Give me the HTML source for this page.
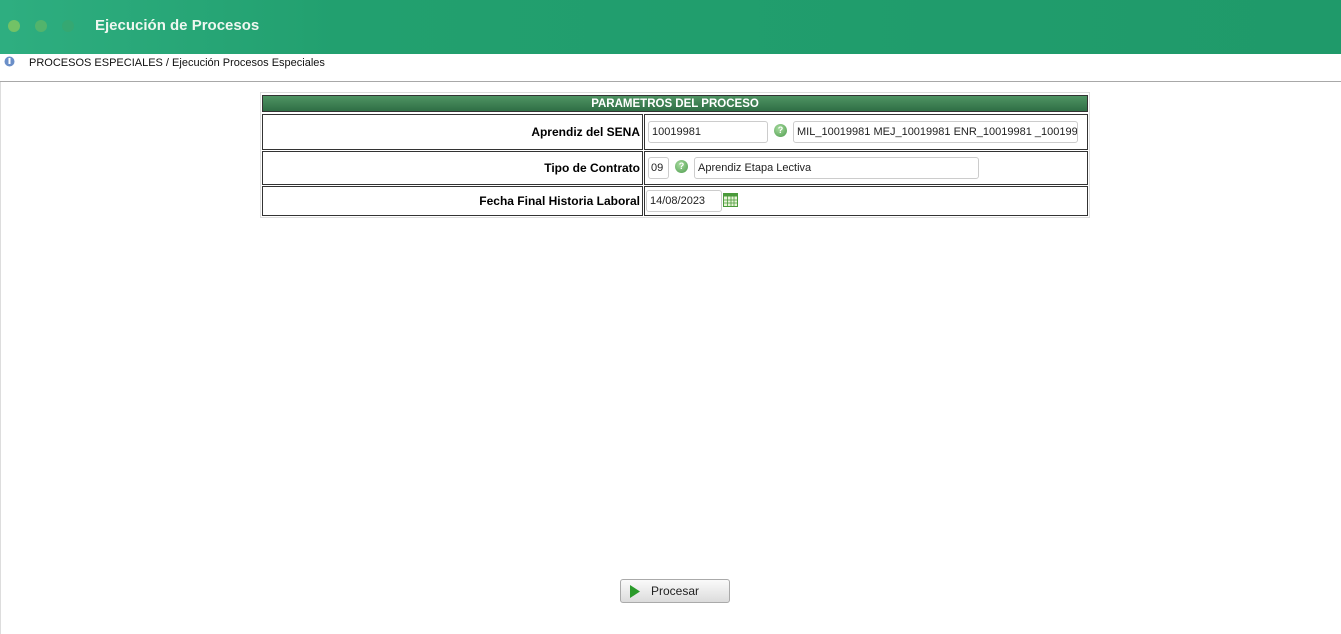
<!DOCTYPE html>
<html><head><meta charset="utf-8"><style>
*{margin:0;padding:0;box-sizing:border-box}
body{width:1341px;height:634px;background:#fff;font-family:"Liberation Sans",sans-serif;font-size:12px;color:#000;position:relative;overflow:hidden}
.hdr{position:absolute;left:0;top:0;width:1341px;height:54px;background:linear-gradient(90deg,#2eae80 0%,#22a06f 25%,#1f9a6a 100%)}
.hdr .t{position:absolute;left:95px;top:17px;color:#eef7f0;font-weight:bold;font-size:15px}
.dot{position:absolute;top:20px;width:12px;height:12px;border-radius:50%}
.bc{position:absolute;left:29px;top:57px;font-size:11px;color:#111}
.line{position:absolute;left:0;top:81px;width:1341px;height:1px;background:#a8a8a8}
.lb{position:absolute;left:0;top:82px;width:1px;height:552px;background:#ddd}
.outer{position:absolute;left:260px;top:92px;width:830px;height:126px;border:1px solid #ddd}
.gh{position:absolute;left:262px;top:95px;width:826px;height:17px;background:linear-gradient(#4f9463,#2f6e45);color:#fff;font-weight:bold;text-align:center;font-size:11.5px;line-height:17px;border:1px solid #333}
.cell{position:absolute;border:1px solid #333}
.lab{text-align:right;font-weight:bold;padding-right:2px}
.inp{position:absolute;border:1px solid #ccc;border-radius:3px;background:#fff;font-size:11px;padding-left:3px;line-height:20px;height:22px;overflow:hidden;white-space:nowrap;color:#222}
.q{position:absolute;width:13px;height:13px;border-radius:50%;background:radial-gradient(circle at 40% 35%,#a8dca0,#4c9a4c);color:#fff;font-size:9px;font-weight:bold;text-align:center;line-height:13px}
.btn{position:absolute;left:620px;top:579px;width:110px;height:24px;border:1px solid #aaa;border-radius:3px;background:linear-gradient(#fafafa,#dcdcdc);font-size:12px}
</style></head><body>
<div class="hdr"><div class="dot" style="left:8px;background:#72c266"></div><div class="dot" style="left:35px;background:#52b46c"></div><div class="dot" style="left:62px;background:#35a872"></div><div class="t">Ejecución de Procesos</div></div>
<svg style="position:absolute;left:4px;top:56px" width="11" height="11"><circle cx="5.5" cy="5.5" r="5" fill="#6b8fc8"/><rect x="4.5" y="2" width="2" height="6" fill="#fff"/></svg>
<div class="bc">PROCESOS ESPECIALES / Ejecución Procesos Especiales</div>
<div class="line"></div><div class="lb"></div>
<div class="outer"></div>
<div class="gh">PARAMETROS DEL PROCESO</div>
<div class="cell lab" style="left:262px;top:114px;width:381px;height:36px;line-height:34px">Aprendiz del SENA</div>
<div class="cell" style="left:644px;top:114px;width:444px;height:36px"></div>
<div class="cell lab" style="left:262px;top:151px;width:381px;height:34px;line-height:32px">Tipo de Contrato</div>
<div class="cell" style="left:644px;top:151px;width:444px;height:34px"></div>
<div class="cell lab" style="left:262px;top:186px;width:381px;height:30px;line-height:28px">Fecha Final Historia Laboral</div>
<div class="cell" style="left:644px;top:186px;width:444px;height:30px"></div>
<div class="inp" style="left:648px;top:121px;width:120px">10019981</div>
<div class="q" style="left:774px;top:124px">?</div>
<div class="inp" style="left:793px;top:121px;width:285px">MIL_10019981 MEJ_10019981 ENR_10019981 _10019981</div>
<div class="inp" style="left:648px;top:157px;width:21px;padding-left:2px">09</div>
<div class="q" style="left:675px;top:160px">?</div>
<div class="inp" style="left:694px;top:157px;width:285px">Aprendiz Etapa Lectiva</div>
<div class="inp" style="left:646px;top:190px;width:76px">14/08/2023</div>
<svg style="position:absolute;left:723px;top:193px" width="15" height="14"><rect x=".5" y=".5" width="14" height="13" fill="#e8f4d8" stroke="#4a9a3a"/><rect x=".5" y=".5" width="14" height="3" fill="#4a9a3a"/><path d="M1 7h13M1 10h13M4.5 3v11M8 3v11M11 3v11" stroke="#4a9a3a" stroke-width=".8"/></svg>
<div class="btn"><svg style="position:absolute;left:9px;top:5px" width="10" height="13"><path d="M0 0L10 6.5L0 13Z" fill="#2a9a2a"/></svg><span style="position:absolute;left:30px;top:4px;color:#222">Procesar</span></div>
</body></html>
